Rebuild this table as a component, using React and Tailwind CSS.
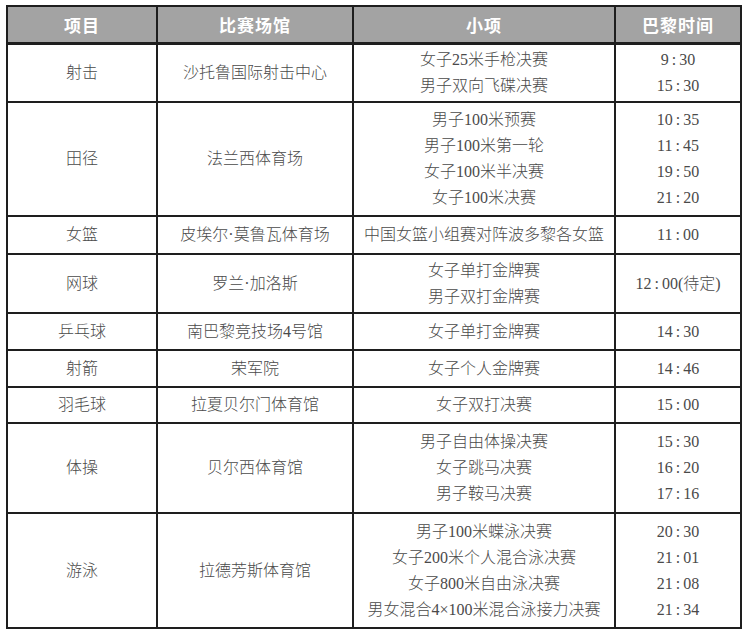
import React from 'react';

const rows = [
  { sport: '射击', venue: '沙托鲁国际射击中心', h: 'h-[59px]', events: ['女子25米手枪决赛', '男子双向飞碟决赛'], times: ['9:30', '15:30'] },
  { sport: '田径', venue: '法兰西体育场', h: 'h-[114px]', events: ['男子100米预赛', '男子100米第一轮', '女子100米半决赛', '女子100米决赛'], times: ['10:35', '11:45', '19:50', '21:20'] },
  { sport: '女篮', venue: '皮埃尔·莫鲁瓦体育场', h: 'h-[38px]', events: ['中国女篮小组赛对阵波多黎各女篮'], times: ['11:00'] },
  { sport: '网球', venue: '罗兰·加洛斯', h: 'h-[59px]', events: ['女子单打金牌赛', '男子双打金牌赛'], times: ['12:00(待定)'] },
  { sport: '乒乓球', venue: '南巴黎竞技场4号馆', h: 'h-[37px]', events: ['女子单打金牌赛'], times: ['14:30'] },
  { sport: '射箭', venue: '荣军院', h: 'h-[37px]', events: ['女子个人金牌赛'], times: ['14:46'] },
  { sport: '羽毛球', venue: '拉夏贝尔门体育馆', h: 'h-[36px]', events: ['女子双打决赛'], times: ['15:00'] },
  { sport: '体操', venue: '贝尔西体育馆', h: 'h-[90px]', events: ['男子自由体操决赛', '女子跳马决赛', '男子鞍马决赛'], times: ['15:30', '16:20', '17:16'] },
  { sport: '游泳', venue: '拉德芳斯体育馆', h: 'h-[115px]', events: ['男子100米蝶泳决赛', '女子200米个人混合泳决赛', '女子800米自由泳决赛', '男女混合4×100米混合泳接力决赛'], times: ['20:30', '21:01', '21:08', '21:34'] },
];

const cell = 'border-2 border-[#1e1e1e] text-center align-middle p-0';

function Time({ value }) {
  const [h, rest] = value.split(':');
  return (
    <div className="leading-[26px]">
      {h}
      <span className="mx-[3px]">:</span>
      {rest}
    </div>
  );
}

export default function App() {
  return (
    <div className="w-[746px] h-[631px] bg-white pl-[6px] pt-[5px]">
      <table
        className="table-fixed border-collapse w-[734px] text-[16px] text-[#4a4a4a] font-light"
        style={{ fontFamily: '"Liberation Serif", "Noto Sans CJK SC", serif' }}
      >
        <colgroup>
          <col className="w-[150px]" />
          <col className="w-[196px]" />
          <col className="w-[262px]" />
          <col className="w-[126px]" />
        </colgroup>
        <thead>
          <tr className="h-[37px] bg-[#a3a3a3] text-white font-bold text-[17px] tracking-[1px]" style={{ fontFamily: '"Noto Sans CJK SC", sans-serif' }}>
            <th className={`${cell} border-b-[3px]`}>项目</th>
            <th className={`${cell} border-b-[3px]`}>比赛场馆</th>
            <th className={`${cell} border-b-[3px]`}>小项</th>
            <th className={`${cell} border-b-[3px]`}>巴黎时间</th>
          </tr>
        </thead>
        <tbody>
          {rows.map((r) => (
            <tr key={r.sport} className={r.h}>
              <td className={cell}>{r.sport}</td>
              <td className={cell}>{r.venue}</td>
              <td className={cell}>
                {r.events.map((e) => (
                  <div key={e} className="leading-[26px]">{e}</div>
                ))}
              </td>
              <td className={cell}>
                {r.times.map((t) => (
                  <Time key={t} value={t} />
                ))}
              </td>
            </tr>
          ))}
        </tbody>
      </table>
    </div>
  );
}
